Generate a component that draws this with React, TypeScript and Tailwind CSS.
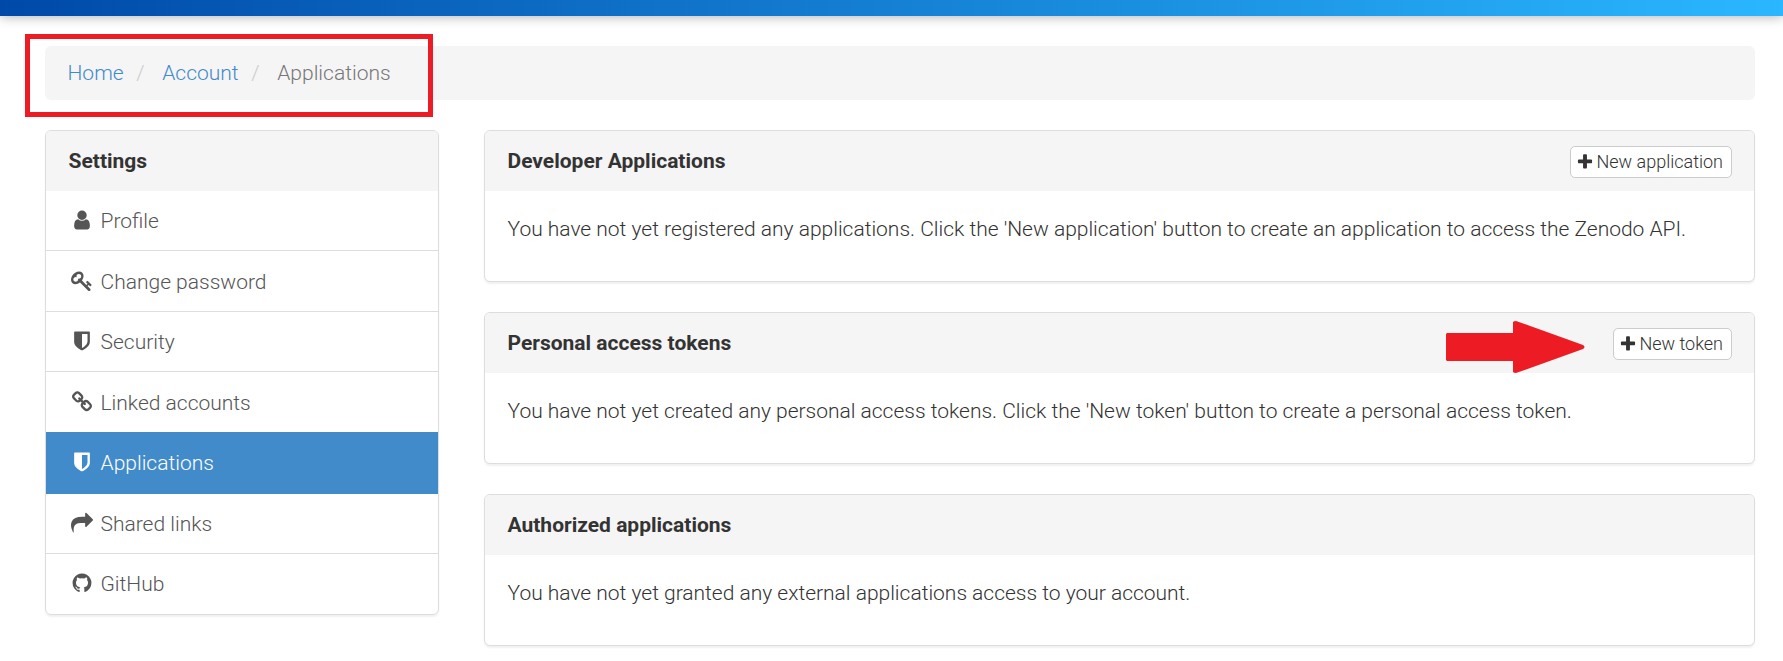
import type { ReactNode } from "react";

const ICONS = {
  user: "M1536 1399q0 109-62.5 187t-150.5 78h-854q-88 0-150.5-78t-62.5-187q0-85 8.5-160.5t31.5-152 58.5-131 94-89 134.5-34.5q131 128 313 128t313-128q76 0 134.5 34.5t94 89 58.5 131 31.5 152 8.5 160.5zm-256-887q0 159-112.5 271.5t-271.5 112.5-271.5-112.5-112.5-271.5 112.5-271.5 271.5-112.5 271.5 112.5 112.5 271.5z",
  key: "M832 512q0-80-56-136t-136-56-136 56-56 136q0 42 19 83-41-19-83-19-80 0-136 56t-56 136 56 136 136 56 136-56 56-136q0-42-19-83 41 19 83 19 80 0 136-56t56-136zm851 704q0 17-49 66t-66 49q-9 0-28.5-16t-36.5-33-38.5-40-24.5-26l-96 96 220 220q28 28 28 68 0 42-39 81t-81 39q-40 0-68-28l-671-671q-176 131-365 131-163 0-265.5-102.5t-102.5-265.5q0-160 95-313t248-248 313-95q163 0 265.5 102.5t102.5 265.5q0 189-131 365l355 355 96-96q-3-3-26-24.5t-40-38.5-33-36.5-16-28.5q0-17 49-66t66-49q13 0 23 10 6 6 46 44.5t82 79.5 86.5 86 73 78 28.5 41z",
  shield: "M1344 960v-640h-448v1137q119-63 213-137 235-184 235-360zm192-768v768q0 86-33.5 170.5t-83 150-118 127.5-126.5 103-121 77.5-89.5 49.5-42.5 20q-12 6-26 6t-26-6q-16-7-42.5-20t-89.5-49.5-121-77.5-126.5-103-118-127.5-83-150-33.5-170.5v-768q0-26 19-45t45-19h1152q26 0 45 19t19 45z",
  link: "M1520 1216q0-40-28-68l-208-208q-28-28-68-28-42 0-72 32 3 3 19 18.5t21.5 21.5 15 19 13 25.5 3.5 27.5q0 40-28 68t-68 28q-15 0-27.5-3.5t-25.5-13-19-15-21.5-21.5-18.5-19q-33 31-33 73 0 40 28 68l206 207q27 27 68 27 40 0 68-26l147-146q28-28 28-67zm-703-705q0-40-28-68l-206-207q-28-28-68-28-39 0-68 27l-147 146q-28 28-28 67 0 40 28 68l208 208q27 27 68 27 42 0 72-31-3-3-19-18.5t-21.5-21.5-15-19-13-25.5-3.5-27.5q0-40 28-68t68-28q15 0 27.5 3.5t25.5 13 19 15 21.5 21.5 18.5 19q33-31 33-73zm895 705q0 120-85 203l-147 146q-83 83-203 83-121 0-204-85l-206-207q-83-83-83-203 0-123 88-209l-88-88q-86 88-208 88-120 0-204-84l-208-208q-84-84-84-204t85-203l147-146q83-83 203-83 121 0 204 85l206 207q83 83 83 203 0 123-88 209l88 88q86-88 208-88 120 0 204 84l208 208q84 84 84 204z",
  share: "M1792 640q0 26-19 45l-512 512q-19 19-45 19t-45-19-19-45v-256h-224q-98 0-175.5 6t-154 21.5-133 42.5-105.5 69.5-80 101-48.5 138.5-17.5 181q0 55 5 123 0 6 2.5 23.5t2.5 26.5q0 15-8.5 25t-23.5 10q-16 0-28-17-7-9-13-22t-13.5-30-10.5-24q-127-285-127-451 0-199 53-333 162-403 875-403h224v-256q0-26 19-45t45-19 45 19l512 512q19 19 19 45z",
  github: "M896 128q209 0 385.5 103t279.5 279.5 103 385.5q0 251-146.5 451.5t-378.5 277.5q-27 5-40-7t-13-30q0-3 .5-76.5t.5-134.5q0-97-52-142 57-6 102.5-18t94-39 81-66.5 53-105 20.5-150.5q0-119-79-206 37-91-8-204-28-9-81 11t-92 44l-38 24q-93-26-192-26t-192 26q-16-11-42.5-27t-83.5-38.5-85-13.5q-45 113-8 204-79 87-79 206 0 85 20.5 150t52.5 105 80.5 67 94 39 102.5 18q-39 36-49 103-21 10-45 15t-57 5-65.5-21.5-55.5-62.5q-19-32-48.5-52t-49.5-24l-20-3q-21 0-29 4.5t-5 11.5 9 14 13 12l7 5q22 10 43.5 38t31.5 51l10 23q13 38 44 61.5t67 30 69.5 7 55.5-3.5l23-4q0 38 .5 88.5t.5 54.5q0 18-13 30t-40 7q-232-77-378.5-277.5t-146.5-451.5q0-209 103-385.5t279.5-279.5 385.5-103z",
  plus: "M1600 736v192q0 40-28 68t-68 28h-416v416q0 40-28 68t-68 28h-192q-40 0-68-28t-28-68v-416h-416q-40 0-68-28t-28-68v-192q0-40 28-68t68-28h416v-416q0-40 28-68t68-28h192q40 0 68 28t28 68v416h416q40 0 68 28t28 68z",
};

type IconName = keyof typeof ICONS;

function Icon({ name, className }: { name: IconName; className: string }) {
  return (
    <svg viewBox="0 0 1792 1792" fill="currentColor" aria-hidden="true" className={className}>
      <path d={ICONS[name]} />
    </svg>
  );
}

const MENU: { icon: IconName; label: string; row: string; link: string }[] = [
  { icon: "user", label: "Profile", row: "border-b border-[#ddd] text-[#555]", link: "h-[59px] pt-[15px]" },
  { icon: "key", label: "Change password", row: "border-b border-[#ddd] text-[#555]", link: "h-[60px] pt-4" },
  { icon: "shield", label: "Security", row: "border-b border-[#ddd] text-[#555]", link: "h-[59px] pt-[15px]" },
  { icon: "link", label: "Linked accounts", row: "text-[#555]", link: "h-[60px] pt-4" },
  { icon: "shield", label: "Applications", row: "bg-[#428bca] text-white", link: "h-[62px] pt-4" },
  { icon: "share", label: "Shared links", row: "border-b border-[#ddd] text-[#555]", link: "h-[59px] pt-[15px]" },
  { icon: "github", label: "GitHub", row: "text-[#555]", link: "h-[60px] pt-[15px]" },
];

function Separator() {
  return <span className="pr-[12.5px] pl-[7.5px] text-[#ccc]">/&nbsp;</span>;
}

function Breadcrumb() {
  return (
    <nav className="relative h-[54px] rounded-md bg-[#f5f5f5] px-[22.5px] py-3 leading-[30px]">
      <a href="#" className="text-[#428bca]">Home</a>{" "}
      <Separator />
      <a href="#" className="text-[#428bca]">Account</a>{" "}
      <Separator />
      <span className="text-[#777]">Applications</span>
      <div className="absolute -top-3 -left-5 h-[83px] w-[408px] border-5 border-[#ed1c24]" />
    </nav>
  );
}

function Sidebar() {
  return (
    <aside className="w-[394px] overflow-hidden rounded-md border border-[#ddd] shadow-[0_1.5px_2px_rgba(0,0,0,0.06)]">
      <div className="h-[60px] bg-[#f5f5f5] px-[22.5px] py-[15px] leading-[30px] font-bold">Settings</div>
      <ul>
        {MENU.map((item) => (
          <li key={item.label} className={item.row}>
            <a href="#" className={"flex items-start px-[22.5px] leading-[30px] " + item.link}>
              <span className="mt-[3px] mr-[5px] flex w-[27px] justify-center">
                <Icon name={item.icon} className="size-[22px]" />
              </span>
              {item.label}
            </a>
          </li>
        ))}
      </ul>
    </aside>
  );
}

function Panel({ title, action, children }: { title: string; action?: ReactNode; children: ReactNode }) {
  return (
    <section className="h-[152px] rounded-md border border-[#ddd] bg-white shadow-[0_1.5px_2px_rgba(0,0,0,0.06)]">
      <header className="flex h-[60px] justify-between rounded-t-[5px] bg-[#f5f5f5] px-[22.5px] py-[15px] leading-[30px]">
        <h3 className="font-bold">{title}</h3>
        {action}
      </header>
      <p className="px-[22.5px] py-[22.5px] leading-[30px] tracking-[-0.011px]">{children}</p>
    </section>
  );
}

function NewButton({ label }: { label: string }) {
  return (
    <button className="flex h-8 items-center gap-0.5 rounded-[5px] border border-[#ccc] bg-white pr-[7.5px] pl-[5.5px] text-[18px] leading-none font-light">
      <Icon name="plus" className="size-[18px]" />
      {label}
    </button>
  );
}

export default function App() {
  return (
    <div className="h-[661px] overflow-hidden bg-white font-[Roboto,sans-serif] text-[21px] font-light text-[#333]">
      <div className="h-4 bg-[linear-gradient(to_right,#0049a8,#2ab7ff)] shadow-[0_1px_12px_rgba(0,0,0,0.3)]" />
      <main className="pt-[30px] pr-7 pl-[45px]">
        <Breadcrumb />
        <div className="mt-[30px] flex items-start gap-[45px]">
          <Sidebar />
          <div className="flex flex-1 flex-col gap-[30px]">
            <Panel title="Developer Applications" action={<NewButton label="New application" />}>
              You have not yet registered any applications. Click the 'New application' button to create an application to access the Zenodo API.
            </Panel>
            <Panel
              title="Personal access tokens"
              action={
                <div className="relative">
                  <NewButton label="New token" />
                  <svg viewBox="0 0 139 52" className="absolute top-[-7px] right-[146.5px] h-[52px] w-[139px] fill-[#ed1c24]">
                    <path d="M1 12H67V1Q68 0 70 0L137 24Q140 26 137 28L70 52Q68 52 67 51V40H1L0 39V13Z" />
                  </svg>
                </div>
              }
            >
              You have not yet created any personal access tokens. Click the 'New token' button to create a personal access token.
            </Panel>
            <Panel title="Authorized applications">
              You have not yet granted any external applications access to your account.
            </Panel>
          </div>
        </div>
      </main>
    </div>
  );
}
